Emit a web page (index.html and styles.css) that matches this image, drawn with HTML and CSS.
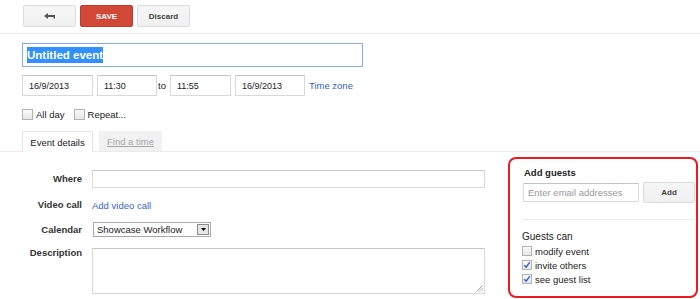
FILE: index.html
```html
<!DOCTYPE html>
<html>
<head>
<meta charset="utf-8">
<link rel="stylesheet" href="styles.css">
</head>
<body>
<div class="toolbar">
  <button class="btn back"><svg width="11" height="7" viewBox="0 0 11 7"><path d="M0 3 L4 0 V2 H11 V5.5 H9.5 V4 H4 V6 Z" fill="#555"/></svg></button>
  <button class="btn save">SAVE</button>
  <button class="btn">Discard</button>
</div>
<div class="head">
  <div class="title"><span class="sel">Untitled event</span></div>
  <div class="when">
    <span class="field w71">16/9/2013</span>
    <span class="field w60">11:30</span>
    <span class="to">to</span>
    <span class="field w61">11:55</span>
    <span class="field w70">16/9/2013</span>
    <a class="link">Time zone</a>
  </div>
  <div class="opts">
    <label class="opt"><span class="cb"></span>All day</label>
    <label class="opt"><span class="cb"></span>Repeat...</label>
  </div>
</div>
<div class="tabbar">
  <div class="tab active">Event details</div>
  <div class="tab inactive"><span>Find a time</span></div>
</div>
<div class="content">
  <div class="form">
    <div class="row r1"><span class="lbl">Where</span><span class="input wide"></span></div>
    <div class="row r2"><span class="lbl">Video call</span><a class="link">Add video call</a></div>
    <div class="row r3"><span class="lbl">Calendar</span>
      <span class="select">Showcase Workflow<span class="arrow"><svg width="5" height="3" viewBox="0 0 5 3"><path d="M0 0 H5 L2.5 3 Z" fill="#000"/></svg></span></span>
    </div>
    <div class="row r4"><span class="lbl">Description</span>
      <span class="textarea"><svg class="grip" width="7" height="7" viewBox="0 0 7 7"><path d="M6.5 0.5 L0.5 6.5 M6.5 3 L3 6.5 M6.5 5.5 L5.5 6.5" stroke="#a8a8a8" stroke-width="1"/></svg></span>
    </div>
  </div>
  <div class="guests">
    <div class="gtitle">Add guests</div>
    <div class="addrow">
      <span class="email">Enter email addresses</span>
      <button class="btn add">Add</button>
    </div>
    <div class="sep"></div>
    <div class="gcan">Guests can</div>
    <label class="gopt"><span class="cb small"></span>modify event</label>
    <label class="gopt"><span class="cb small checked"><svg width="8" height="8" viewBox="0 0 8 8"><path d="M1.2 4.2 L3.2 6.2 L6.8 1.2" stroke="#2f5fc0" stroke-width="1.4" fill="none"/></svg></span>invite others</label>
    <label class="gopt"><span class="cb small checked"><svg width="8" height="8" viewBox="0 0 8 8"><path d="M1.2 4.2 L3.2 6.2 L6.8 1.2" stroke="#2f5fc0" stroke-width="1.4" fill="none"/></svg></span>see guest list</label>
  </div>
</div>
</body>
</html>
```
FILE: styles.css
```css
body {
  margin: 0;
  font-family: "Liberation Sans", Arial, sans-serif;
  font-size: 9.5px;
  color: #222;
  background: #fff;
}

.toolbar {
  display: flex;
  gap: 4px;
  padding: 5px 0 0 23px;
  height: 28px;
  border-bottom: 1px solid #ebebeb;
}

.btn {
  width: 53px;
  height: 22px;
  box-sizing: border-box;
  border: 1px solid #dcdcdc;
  border-radius: 2px;
  background: linear-gradient(#f6f6f6, #f0f0f0);
  font-family: "Liberation Sans", Arial, sans-serif;
  font-weight: bold;
  font-size: 8px;
  color: #444;
  display: flex;
  align-items: center;
  justify-content: center;
  padding: 0;
}

.save {
  background: #d14836;
  border-color: #c53727;
  color: #fff;
}

.head {
  padding-left: 22px;
}

.title {
  margin-top: 9px;
  width: 341px;
  height: 24px;
  box-sizing: border-box;
  border: 1px solid #86acef;
  padding: 0 4px;
  display: flex;
  align-items: center;
}

.sel {
  background: #3390ff;
  color: #fff;
  font-weight: bold;
  font-size: 11.5px;
  line-height: 16px;
}

.when {
  display: flex;
  align-items: center;
  gap: 4px;
  margin-top: 8px;
  height: 21px;
}

.field {
  box-sizing: border-box;
  height: 21px;
  border: 1px solid #d9d9d9;
  border-top-color: #c4c4c4;
  padding-left: 6px;
  display: flex;
  align-items: center;
  font-size: 9px;
  color: #222;
}

.w71 { width: 71px; }
.w60 { width: 60px; }
.w61 { width: 61px; }
.w70 { width: 70px; }

.to {
  margin-left: -3px;
  margin-right: 0;
  color: #222;
}

.link {
  color: #3563cc;
  cursor: pointer;
}

.opts {
  display: flex;
  align-items: center;
  margin-top: 10px;
  height: 16px;
}

.opt {
  display: flex;
  align-items: center;
  gap: 3px;
  margin-right: 9px;
}

.cb {
  width: 11px;
  height: 11px;
  box-sizing: border-box;
  border: 1px solid #b3b3b3;
  background: linear-gradient(#fafafa, #e6e6e6);
  display: inline-flex;
  align-items: center;
  justify-content: center;
  flex: none;
}

.cb.small {
  width: 10px;
  height: 10px;
}

.tabbar {
  display: flex;
  gap: 6px;
  margin-top: 9px;
  padding-left: 22px;
  border-bottom: 1px solid #ebebeb;
  height: 20px;
}

.tab {
  box-sizing: border-box;
  display: flex;
  align-items: center;
  justify-content: center;
}

.active {
  width: 71px;
  height: 21px;
  border: 1px solid #e5e5e5;
  border-bottom: none;
  background: #fff;
  color: #222;
}

.inactive {
  width: 63px;
  height: 20px;
  background: #f1f1f1;
  color: #a6a6a6;
  text-decoration: underline;
}

.content {
  display: flex;
  padding-left: 22px;
}

.form {
  width: 463px;
  padding-top: 18px;
}

.row {
  display: flex;
  align-items: center;
}

.lbl {
  width: 60px;
  margin-right: 10px;
  text-align: right;
  font-weight: bold;
  color: #333;
  flex: none;
  line-height: 12px;
}

.r1 { height: 18px; }
.r2 { height: 34px; }
.r3 { height: 15px; }
.r4 {
  margin-top: 11px;
  align-items: flex-start;
}
.r4 .lbl { margin-top: -1px; }

.input {
  box-sizing: border-box;
  height: 18px;
  border: 1px solid #d9d9d9;
  border-top-color: #c4c4c4;
}

.wide { width: 394px; }

.select {
  box-sizing: border-box;
  width: 118px;
  height: 15px;
  margin-left: 1px;
  border: 1px solid #a9a9a9;
  padding-left: 3px;
  display: flex;
  align-items: center;
  justify-content: space-between;
  color: #222;
}

.arrow {
  box-sizing: border-box;
  width: 12px;
  height: 11px;
  margin-right: 1px;
  border: 1px solid #8c8c8c;
  background: #e6e6e6;
  display: flex;
  align-items: center;
  justify-content: center;
}

.textarea {
  position: relative;
  box-sizing: border-box;
  width: 394px;
  height: 46px;
  border: 1px solid #d9d9d9;
  border-top-color: #c4c4c4;
}

.grip {
  position: absolute;
  right: 1px;
  bottom: 1px;
}

.guests {
  margin-left: 23px;
  margin-top: 5px;
  width: 190px;
  height: 141px;
  box-sizing: border-box;
  border: 2px solid #ec1a22;
  border-radius: 8px;
  padding: 8px 1px 0 12px;
  display: flex;
  flex-direction: column;
}

.gtitle {
  font-weight: bold;
  line-height: 12px;
  margin-left: 2px;
  color: #222;
}

.addrow {
  display: flex;
  align-items: center;
  height: 21px;
  margin-top: 3px;
  margin-left: 1px;
}

.email {
  box-sizing: border-box;
  width: 116px;
  height: 19px;
  border: 1px solid #d9d9d9;
  border-top-color: #c4c4c4;
  padding-left: 4px;
  display: flex;
  align-items: center;
  color: #999;
}

.add {
  width: 52px;
  height: 21px;
  margin-left: 4px;
}

.sep {
  margin-top: 16px;
  height: 1px;
  background: #ebebeb;
}

.gcan {
  margin-top: 11px;
  line-height: 12px;
  font-size: 10px;
  color: #222;
}

.gopt {
  display: flex;
  align-items: center;
  gap: 3px;
  height: 14px;
}

.gopt:first-of-type {
  margin-top: 1px;
}
```
